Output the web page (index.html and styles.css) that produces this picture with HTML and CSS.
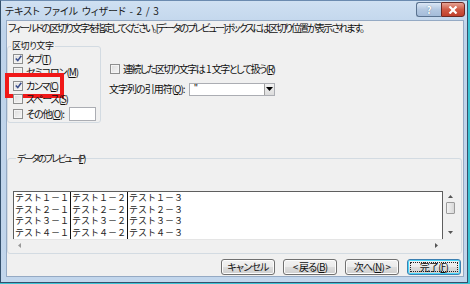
FILE: index.html
```html
<!DOCTYPE html>
<html lang="ja">
<head>
<meta charset="utf-8">
<link rel="stylesheet" href="styles.css">
</head>
<body>
<div class="window">
  <div class="titlebar">
    <span class="title">テキスト ファイル ウィザード - 2 / 3</span>
    <div class="caption-btns">
      <span class="cbtn help">?</span>
      <span class="cbtn close"><svg width="10" height="8" viewBox="0 0 10 8"><path d="M1.5 0.5 L8.5 7.5 M8.5 0.5 L1.5 7.5" stroke="#fff" stroke-width="2.2"/></svg></span>
    </div>
  </div>
  <div class="client">
    <p class="intro">フィールドの区切り文字を指定してください。[データのプレビュー] ボックスには区切り位置が表示されます。</p>
    <div class="top-row">
      <fieldset class="group delims">
        <legend>区切り文字</legend>
        <label class="cb"><span class="box"><svg width="7" height="7" viewBox="0 0 7 7"><path d="M0.8 3.5 L2.8 5.6 L6.3 0.8" stroke="#3b4f8c" stroke-width="1.6" fill="none"/></svg></span>タブ(<u>T</u>)</label>
        <label class="cb"><span class="box"></span>セミコロン(<u>M</u>)</label>
        <label class="cb comma"><span class="box"><svg width="7" height="7" viewBox="0 0 7 7"><path d="M0.8 3.5 L2.8 5.6 L6.3 0.8" stroke="#3b4f8c" stroke-width="1.6" fill="none"/></svg></span>カンマ(<u>C</u>)<span class="highlight"></span></label>
        <label class="cb"><span class="box"></span>スペース(<u>S</u>)</label>
        <label class="cb other"><span class="box"></span>その他(<u>O</u>):<span class="textbox"></span></label>
      </fieldset>
      <div class="options">
        <label class="cb opt"><span class="box"></span>連続した区切り文字は 1 文字として扱う(<u>R</u>)</label>
        <div class="quote-row">
          <span class="quote-label">文字列の引用符(<u>Q</u>):</span>
          <div class="combo"><span class="combo-val">"</span><span class="combo-btn"><svg width="7" height="4" viewBox="0 0 7 4"><path d="M0 0 H7 L3.5 4 Z" fill="#000"/></svg></span></div>
        </div>
      </div>
    </div>
    <fieldset class="group preview">
      <legend>データのプレビュー(<u>P</u>)</legend>
      <div class="preview-box">
        <div class="preview-main">
          <div class="grid">
            <div class="col"><div>テスト１－１</div><div>テスト２－１</div><div>テスト３－１</div><div>テスト４－１</div></div>
            <div class="col"><div>テスト１－２</div><div>テスト２－２</div><div>テスト３－２</div><div>テスト４－２</div></div>
            <div class="col last"><div>テスト１－３</div><div>テスト２－３</div><div>テスト３－３</div><div>テスト４－３</div></div>
          </div>
          <div class="vscroll">
            <svg class="arr" width="5" height="3" viewBox="0 0 5 3"><path d="M0 3 L2.5 0 L5 3 Z" fill="#555"/></svg>
            <span class="thumb"></span>
            <span class="vspace"></span>
            <svg class="arr" width="5" height="3" viewBox="0 0 5 3"><path d="M0 0 L2.5 3 L5 0 Z" fill="#555"/></svg>
          </div>
        </div>
        <div class="hscroll">
          <svg width="3" height="5" viewBox="0 0 3 5"><path d="M3 0 L0 2.5 L3 5 Z" fill="#999"/></svg>
          <svg width="3" height="5" viewBox="0 0 3 5"><path d="M0 0 L3 2.5 L0 5 Z" fill="#555"/></svg>
        </div>
      </div>
    </fieldset>
    <div class="buttons">
      <button class="btn">キャンセル</button>
      <button class="btn">&lt; 戻る(<u>B</u>)</button>
      <button class="btn">次へ(<u>N</u>) &gt;</button>
      <button class="btn default"><span class="focus">完了(<u>F</u>)</span></button>
    </div>
  </div>
</div>
</body>
</html>
```

FILE: styles.css
```css
* { box-sizing: border-box; }
html, body { margin: 0; padding: 0; }
body {
  width: 470px; height: 284px; overflow: hidden;
  background: #3cc4d4;
  font-family: "Noto Sans CJK JP", "Noto Sans", sans-serif;
  font-size: 10px; line-height: 12px; color: #111;
  font-feature-settings: "palt";
}
u { text-decoration: underline; text-underline-offset: 1px; }
.window {
  width: 468px; height: 283px;
  display: flex; flex-direction: column;
  background: linear-gradient(#cfe0f2, #bed3ea 30px, #c2d6ec);
  border: 1px solid #34506c;
  border-top-color: #6b8bb0;
  padding: 0 3px 5px 5px;
}
.titlebar {
  height: 19px; flex: none;
  display: flex; align-items: center; justify-content: space-between;
}
.title { margin-left: -1px; letter-spacing: 0; word-spacing: 1.4px; color: #1a1a1a; }
.caption-btns { display: flex; align-self: flex-start; margin-top: 1px; margin-right: -1px; }
.cbtn {
  height: 15px; display: flex; align-items: center; justify-content: center;
  border: 1px solid #5a7390; font-size: 10px; line-height: 10px;
}
.help {
  width: 25px; border-radius: 3px 0 0 3px; border-right: none;
  background: linear-gradient(#dbe7f5, #b3c8e1 50%, #a4bcd9);
  color: #fff; font-weight: bold; text-shadow: 0 0 1px #44607f;
}
.close {
  width: 24px; border-radius: 0 3px 3px 0; border-color: #6b2a24;
  background: linear-gradient(#e6a394, #cf5a45 50%, #c0402c);
}
.client {
  flex: 1; min-height: 0;
  background: #f0f0f0;
  border: 1px solid #95aac4;
  display: flex; flex-direction: column;
}
.client > * { flex: none; }
.intro { margin: 0; padding: 1px 0 0 1px; letter-spacing: -1.9px; height: 19px; white-space: nowrap; }
.top-row { display: flex; }
.group {
  margin: 0; padding: 0;
  border: 1px solid #d3dbe2; border-radius: 3px;
  min-width: 0;
}
.group legend { padding: 0 1px; margin-left: 3px; line-height: 12px; }
.delims { width: 94px; height: 83px; margin: 0; }
.delims legend { font-size: 9px; letter-spacing: -0.4px; }
.cb { display: flex; align-items: center; height: 13.5px; white-space: nowrap; position: relative; letter-spacing: -0.9px; }
.delims .cb { margin-left: 5px; letter-spacing: -1.1px; }
.delims .cb.comma { letter-spacing: -1.4px; }
.box {
  width: 10px; height: 10px; flex: none; margin-right: 3px;
  border: 1px solid #8e8f8f;
  background: linear-gradient(135deg, #dcdcdc, #f6f6f6);
  box-shadow: inset 0 0 0 1px #f4f4f4;
  display: flex; align-items: center; justify-content: center;
}
.other { height: 15px; }
.textbox { width: 27px; height: 14px; margin-left: 5px; background: #fff; border: 1px solid #abadb3; }
.highlight {
  position: absolute; left: -8px; top: -6px; width: 59px; height: 25px;
  border: 4px solid #f01818;
}
.options { margin-left: 8px; padding-top: 22px; }
.options .cb.opt { margin-left: 1px; letter-spacing: -1.5px; word-spacing: 1px; }
.quote-row { display: flex; align-items: center; margin-top: 7px; }
.quote-label { letter-spacing: -1px; }
.combo {
  margin-left: 4px; width: 86px; height: 13px;
  background: #fff; border: 1px solid #abadb3;
  display: flex; justify-content: space-between; align-items: center;
}
.combo-val { padding-left: 4px; font-size: 9px; color: #000; }
.combo-btn {
  width: 10px; height: 11px; display: flex; align-items: center; justify-content: center;
  background: linear-gradient(#f2f2f2, #dcdcdc); border-left: 1px solid #a0a0a0;
}
.preview { margin: 29px 1px 0 0; height: 102px; padding: 27px 3px 3px 5px; }
.preview legend { letter-spacing: -2px; font-size: 9.5px; }
.preview-box { display: flex; flex-direction: column; }
.preview-main { display: flex; height: 48px; }
.grid {
  width: 430px; display: flex; background: #fff;
  border-top: 1px solid #5e5e5e; border-left: 1px solid #5e5e5e; border-right: 1px solid #5e5e5e;
  font-family: "Noto Sans CJK JP", monospace; font-size: 9px; line-height: 11.5px;
  font-feature-settings: normal; color: #222;
}
.col { width: 57px; border-right: 1px solid #111; padding-left: 1px; letter-spacing: 0; white-space: nowrap; overflow: hidden; }
.col.last { border-right: none; }
.vscroll {
  width: 15px; display: flex; flex-direction: column; align-items: center;
  background: #f0f0f0; padding-top: 4px;
}
.thumb { width: 9px; height: 12px; margin-top: 4px; border: 1px solid #9b9b9b; border-radius: 1px; background: linear-gradient(90deg, #f3f3f3, #d8d8d8); }
.vspace { flex: 1; }
.vscroll .arr:last-child { margin-bottom: 5px; }
.hscroll { height: 12px; width: 430px; display: flex; justify-content: space-between; align-items: center; padding: 0 5px; border-top: 1px solid #e5e5e5; }
.buttons { display: flex; justify-content: flex-end; gap: 8px; margin-top: 5px; padding-right: 2px; }
.btn {
  width: 54px; height: 16px; margin: 0; padding: 0;
  font-family: inherit; font-size: 10px; line-height: 12px; letter-spacing: -0.8px; color: #111;
  font-feature-settings: "palt";
  border: 1px solid #707070; border-radius: 3px;
  background: linear-gradient(#f2f2f2, #ebebeb 50%, #dddddd 51%, #cfcfcf);
  box-shadow: inset 0 0 0 1px #fcfcfc;
}
.default { border-color: #3c7fb1; box-shadow: inset 0 0 0 1px #48d8fb; display: flex; padding: 2px; }
.focus { flex: 1; border: 1px dotted #222; display: flex; align-items: center; justify-content: center; line-height: 10px; }
```
